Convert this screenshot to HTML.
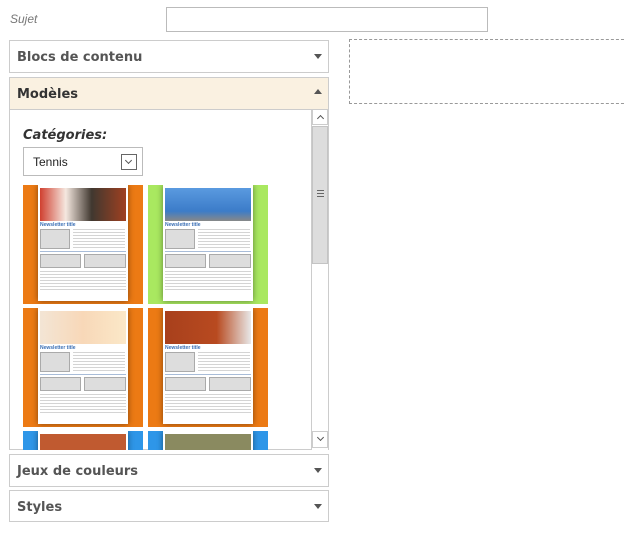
<!DOCTYPE html>
<html><head><meta charset="utf-8"><style>
*{box-sizing:border-box;margin:0;padding:0}
body{width:624px;height:537px;background:#fff;position:relative;overflow:hidden;font-family:"DejaVu Sans",Verdana,sans-serif}
.abs{position:absolute}
.lbl{left:10px;top:12px;font:italic 12px "Liberation Sans",Arial,sans-serif;color:#777}
.inp{left:166px;top:7px;width:322px;height:25px;border:1px solid #bbb}
.dash{left:349px;top:39px;width:280px;height:65px;border:1px dashed #999;border-right:none}
.panel{left:9px;width:320px;border:1px solid #ccc;background:#fff}
.ph{height:31px;font-weight:bold;font-size:13px;color:#555;padding:9px 0 0 7px}
.arr{position:absolute;right:6px;top:13px;width:0;height:0;border-left:4px solid transparent;border-right:4px solid transparent;border-top:5px solid #555}
.up{border-top:none;border-bottom:5px solid #555;top:11px}
.thumb{position:absolute;width:120px;height:119px;overflow:hidden}
.pg{position:absolute;left:15px;top:0;width:90px;height:116px;background:#fff;box-shadow:0 0 6px rgba(0,0,0,.45)}
.ph1{position:absolute;left:2px;top:3px;width:86px;height:33px}
.tt{position:absolute;left:2px;top:37px;font:bold 5px "Liberation Sans",sans-serif;color:#3a6fb5}
.gb{position:absolute;background:#ddd;border:1px solid #aaa}
.ln{position:absolute;height:20px;background:repeating-linear-gradient(#d4d4d4 0 1px,#fff 1px 3px)}
.hl{position:absolute;height:1px;background:#a8bcd8}
.chev{position:absolute;left:5px;width:5px;height:5px;border-left:1px solid #555;border-top:1px solid #555}
</style></head><body>
<div class="abs lbl">Sujet</div>
<div class="abs inp"></div>
<div class="abs dash"></div>

<div class="abs panel" style="top:40px;height:33px"><div class="ph">Blocs de contenu</div><div class="arr"></div></div>

<div class="abs panel" style="top:77px;height:373px">
 <div class="ph" style="background:#faf1e1;color:#333;border-bottom:1px solid #ccc;height:32px">Modèles</div><div class="arr up"></div>
 <div class="abs" style="left:13px;top:50px;font:italic bold 13px 'DejaVu Sans',sans-serif;color:#333">Catégories:</div>
 <div class="abs" style="left:13px;top:69px;width:120px;height:29px;border:1px solid #bbb;font:12px 'Liberation Sans',sans-serif;padding:7px 0 0 9px;color:#222">Tennis
  <div class="abs" style="left:97px;top:6px;width:16px;height:16px;border:1px solid #666"><div class="chev" style="top:3px;left:4px;transform:rotate(225deg)"></div></div></div>
 <div class="abs" style="left:301px;top:31px;width:17px;height:341px;background:#fff;border-left:1px solid #ccc">
  <div class="abs" style="left:0;top:0;width:16px;height:16px;border:1px solid #ccc"><div class="chev" style="top:6px;transform:rotate(45deg)"></div></div>
  <div class="abs" style="left:0;top:17px;width:16px;height:138px;background:#ddd;border:1px solid #c4c4c4"><div style="margin:63px 0 0 4px;width:7px;height:7px;background:repeating-linear-gradient(#666 0 1px,transparent 1px 3px)"></div></div>
  <div class="abs" style="left:0;top:322px;width:16px;height:17px;border:1px solid #ccc"><div class="chev" style="top:3px;transform:rotate(225deg)"></div></div>
 </div>
 <div class="abs" style="left:0;top:107px;width:301px;height:265px;overflow:hidden">
  <div class="thumb" style="left:13px;top:0;background:#ec7a14"><div class="pg"><div class="ph1" style="background:linear-gradient(90deg,#d04030,#f5e8e0 30%,#403830 60%,#a04020)"></div><div class="tt">Newsletter title</div><div class="gb" style="left:2px;top:44px;width:30px;height:20px"></div><div class="ln" style="left:35px;top:44px;width:52px"></div><div class="hl" style="left:2px;top:66px;width:86px"></div><div class="gb" style="left:2px;top:69px;width:41px;height:14px"></div><div class="gb" style="left:46px;top:69px;width:42px;height:14px"></div><div class="ln" style="left:2px;top:86px;width:86px"></div></div></div>
  <div class="thumb" style="left:138px;top:0;background:#a9e860"><div class="pg"><div class="ph1" style="background:linear-gradient(#5a9ae0,#3c7cc8 70%,#888)"></div><div class="tt">Newsletter title</div><div class="gb" style="left:2px;top:44px;width:30px;height:20px"></div><div class="ln" style="left:35px;top:44px;width:52px"></div><div class="hl" style="left:2px;top:66px;width:86px"></div><div class="gb" style="left:2px;top:69px;width:41px;height:14px"></div><div class="gb" style="left:46px;top:69px;width:42px;height:14px"></div><div class="ln" style="left:2px;top:86px;width:86px"></div></div></div>
  <div class="thumb" style="left:13px;top:123px;background:#ec7a14"><div class="pg"><div class="ph1" style="background:linear-gradient(90deg,#f3e5d5,#f8d8b8 50%,#fbe8c8)"></div><div class="tt">Newsletter title</div><div class="gb" style="left:2px;top:44px;width:30px;height:20px"></div><div class="ln" style="left:35px;top:44px;width:52px"></div><div class="hl" style="left:2px;top:66px;width:86px"></div><div class="gb" style="left:2px;top:69px;width:41px;height:14px"></div><div class="gb" style="left:46px;top:69px;width:42px;height:14px"></div><div class="ln" style="left:2px;top:86px;width:86px"></div></div></div>
  <div class="thumb" style="left:138px;top:123px;background:#ec7a14"><div class="pg"><div class="ph1" style="background:linear-gradient(90deg,#a8401c,#b84a20 60%,#e8e8e8)"></div><div class="tt">Newsletter title</div><div class="gb" style="left:2px;top:44px;width:30px;height:20px"></div><div class="ln" style="left:35px;top:44px;width:52px"></div><div class="hl" style="left:2px;top:66px;width:86px"></div><div class="gb" style="left:2px;top:69px;width:41px;height:14px"></div><div class="gb" style="left:46px;top:69px;width:42px;height:14px"></div><div class="ln" style="left:2px;top:86px;width:86px"></div></div></div>
  <div class="thumb" style="left:13px;top:246px;background:#2e96e8"><div class="pg"><div class="ph1" style="background:#c05a30"></div></div></div>
  <div class="thumb" style="left:138px;top:246px;background:#2e96e8"><div class="pg"><div class="ph1" style="background:#8a8a60"></div></div></div>
 </div>
</div>

<div class="abs panel" style="top:454px;height:33px"><div class="ph">Jeux de couleurs</div><div class="arr"></div></div>
<div class="abs panel" style="top:490px;height:32px"><div class="ph">Styles</div><div class="arr"></div></div>
</body></html>
